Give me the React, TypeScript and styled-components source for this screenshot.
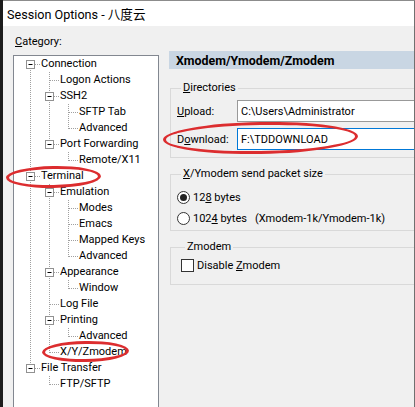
import React from 'react';
import styled, { createGlobalStyle } from 'styled-components';

interface TreeNode {
  label: string;
  children?: TreeNode[];
}

interface TreeRow {
  label: string;
  guides: boolean[];
  first: boolean;
  last: boolean;
  hasChildren: boolean;
}

const categories: TreeNode[] = [
  {
    label: 'Connection',
    children: [
      { label: 'Logon Actions' },
      { label: 'SSH2', children: [{ label: 'SFTP Tab' }, { label: 'Advanced' }] },
      { label: 'Port Forwarding', children: [{ label: 'Remote/X11' }] },
    ],
  },
  {
    label: 'Terminal',
    children: [
      {
        label: 'Emulation',
        children: [
          { label: 'Modes' },
          { label: 'Emacs' },
          { label: 'Mapped Keys' },
          { label: 'Advanced' },
        ],
      },
      { label: 'Appearance', children: [{ label: 'Window' }] },
      { label: 'Log File' },
      { label: 'Printing', children: [{ label: 'Advanced' }] },
      { label: 'X/Y/Zmodem' },
    ],
  },
  { label: 'File Transfer', children: [{ label: 'FTP/SFTP' }] },
];

const flatten = (nodes: TreeNode[], guides: boolean[], out: TreeRow[]) => {
  nodes.forEach((node, i) => {
    const last = i === nodes.length - 1;
    out.push({
      label: node.label,
      guides,
      first: guides.length === 0 && i === 0,
      last,
      hasChildren: !!node.children?.length,
    });
    if (node.children) {
      flatten(node.children, [...guides, !last], out);
    }
  });
  return out;
};

const GlobalStyle = createGlobalStyle`
  html, body {
    margin: 0;
    padding: 0;
    background: #1c1c1c;
  }
  body {
    font-family: Roboto, "Noto Sans", "Noto Sans CJK SC", sans-serif;
    color: #000;
  }
`;

const Screen = styled.div`
  position: relative;
  width: 415px;
  height: 407px;
  box-sizing: border-box;
  padding-left: 3px;
  display: flex;
  overflow: hidden;
  background: #1c1c1c;
`;

const Window = styled.div`
  flex: 1;
  min-width: 0;
  display: flex;
  flex-direction: column;
  background: #f0f0f0;
  border-top: 1px solid #8c8c8c;
  border-right: 1px solid #707070;
`;

const TitleBar = styled.div`
  height: 25px;
  flex-shrink: 0;
  display: flex;
  align-items: center;
  padding-left: 4px;
  background: #fff;
  font-size: 12.6px;
  font-family: Roboto, "Noto Sans CJK SC", sans-serif;
`;

const Body = styled.div`
  flex: 1;
  display: flex;
  overflow: hidden;
  padding: 8px 0 0 10px;
`;

const LeftColumn = styled.div`
  width: 146px;
  flex-shrink: 0;
  display: flex;
  flex-direction: column;
`;

const FieldLabel = styled.div`
  font-size: 11px;
  line-height: 16px;
  padding-left: 2px;
  margin-bottom: 5px;
`;

const TreeBox = styled.div`
  height: 380px;
  flex-shrink: 0;
  box-sizing: border-box;
  background: #fff;
  border: 1px solid #828790;
  padding-left: 7px;
`;

const TreeLine = styled.div`
  display: flex;
  align-items: center;
  height: 16px;
`;

const TreeLabel = styled.span`
  margin-left: 1px;
  font-size: 11px;
  line-height: 16px;
  white-space: nowrap;
`;

const RightColumn = styled.div`
  width: 300px;
  flex-shrink: 0;
  margin-left: 10px;
  padding-top: 17px;
`;

const PageHeader = styled.div`
  height: 18px;
  display: flex;
  align-items: center;
  padding-left: 7px;
  background: #c9d6e3;
  font-size: 12.4px;
  font-weight: 700;
`;

const Group = styled.fieldset<{ $top: number; $pad: string }>`
  margin: ${(p) => p.$top}px 0 0 1px;
  padding: ${(p) => p.$pad};
  min-width: 0;
  border: 1px solid #d9d9d9;
`;

const GroupTitle = styled.legend`
  margin-left: 4px;
  padding: 0 2px;
  font-size: 11px;
  line-height: 16px;
`;

const PathRows = styled.div`
  display: flex;
  flex-direction: column;
  gap: 6px;
`;

const PathRow = styled.div`
  display: flex;
  align-items: center;
  height: 22px;
`;

const PathLabel = styled.span`
  width: 60px;
  flex-shrink: 0;
  font-size: 11px;
`;

const PathInput = styled.input<{ $focused?: boolean }>`
  width: 200px;
  height: 22px;
  box-sizing: border-box;
  margin: 0;
  padding: 0 3px;
  border: 1px solid ${(p) => (p.$focused ? '#0078d7' : '#999')};
  background: #fff;
  font-family: Roboto, sans-serif;
  font-size: 11px;
  color: #000;
  outline: none;
`;

const OptionRows = styled.div`
  display: flex;
  flex-direction: column;
  gap: 1px;
`;

const OptionRow = styled.label`
  display: flex;
  align-items: center;
  height: 20px;
  font-size: 11px;
  white-space: nowrap;
`;

const Radio = styled.span<{ $checked?: boolean }>`
  width: 13px;
  height: 13px;
  box-sizing: border-box;
  border-radius: 50%;
  border: 1px solid #333;
  background: #fff;
  margin-right: 3px;
  display: flex;
  align-items: center;
  justify-content: center;
  flex-shrink: 0;

  &::after {
    content: '';
    width: 7px;
    height: 7px;
    border-radius: 50%;
    background: ${(p) => (p.$checked ? '#222' : 'transparent')};
  }
`;

const CheckBox = styled.span`
  width: 13px;
  height: 13px;
  box-sizing: border-box;
  border: 1px solid #333;
  background: #fff;
  margin-right: 3px;
  flex-shrink: 0;
`;

const Note = styled.span`
  margin-left: 8px;
`;

const Annotation = styled.div<{ $x: number; $y: number; $w: number; $h: number; $rot?: number }>`
  position: absolute;
  left: ${(p) => p.$x}px;
  top: ${(p) => p.$y}px;
  width: ${(p) => p.$w}px;
  height: ${(p) => p.$h}px;
  box-sizing: border-box;
  border: 3px solid #dc2d2f;
  border-radius: 50%;
  transform: rotate(${(p) => p.$rot ?? 0}deg);
  pointer-events: none;
`;

const DOT = '#a0a0a0';

const Guide = ({ on }: { on: boolean }) => (
  <svg width="19" height="16" viewBox="0 0 19 16">
    {on && <line x1="9.5" y1="0" x2="9.5" y2="16" stroke={DOT} strokeDasharray="1 1" />}
  </svg>
);

const Connector = ({ row }: { row: TreeRow }) => (
  <svg width="19" height="16" viewBox="0 0 19 16">
    <line
      x1="9.5"
      y1={row.first ? 8 : 0}
      x2="9.5"
      y2={row.last ? 9 : 16}
      stroke={DOT}
      strokeDasharray="1 1"
    />
    <line x1="10" y1="8.5" x2="19" y2="8.5" stroke={DOT} strokeDasharray="1 1" />
    {row.hasChildren && (
      <>
        <rect x="5.5" y="4.5" width="8" height="8" fill="#fff" stroke="#919191" />
        <line x1="7.5" y1="8.5" x2="11.5" y2="8.5" stroke="#000" />
      </>
    )}
  </svg>
);

export default function App() {
  const rows = flatten(categories, [], []);

  return (
    <Screen>
      <GlobalStyle />
      <Window>
        <TitleBar>Session Options - 八度云</TitleBar>
        <Body>
          <LeftColumn>
            <FieldLabel>
              <u>C</u>ategory:
            </FieldLabel>
            <TreeBox>
              {rows.map((row, i) => (
                <TreeLine key={i}>
                  {row.guides.map((on, j) => (
                    <Guide key={j} on={on} />
                  ))}
                  <Connector row={row} />
                  <TreeLabel>{row.label}</TreeLabel>
                </TreeLine>
              ))}
            </TreeBox>
          </LeftColumn>

          <RightColumn>
            <PageHeader>Xmodem/Ymodem/Zmodem</PageHeader>

            <Group $top={11} $pad="4px 0 7px 6px">
              <GroupTitle>
                <u>D</u>irectories
              </GroupTitle>
              <PathRows>
                <PathRow>
                  <PathLabel>
                    <u>U</u>pload:
                  </PathLabel>
                  <PathInput readOnly value={'C:\\Users\\Administrator'} />
                </PathRow>
                <PathRow>
                  <PathLabel>
                    D<u>o</u>wnload:
                  </PathLabel>
                  <PathInput $focused readOnly value={'F:\\TDDOWNLOAD'} />
                </PathRow>
              </PathRows>
            </Group>

            <Group $top={8} $pad="5px 0 2px 6px">
              <GroupTitle>
                <u>X</u>/Ymodem send packet size
              </GroupTitle>
              <OptionRows>
                <OptionRow>
                  <Radio $checked />
                  12<u>8</u>&nbsp;bytes
                </OptionRow>
                <OptionRow>
                  <Radio />
                  102<u>4</u>&nbsp;bytes
                  <Note>(Xmodem-1k/Ymodem-1k)</Note>
                </OptionRow>
              </OptionRows>
            </Group>

            <Group $top={8} $pad="0 0 9px 10px">
              <GroupTitle>Zmodem</GroupTitle>
              <OptionRow>
                <CheckBox />
                Disable&nbsp;<u>Z</u>modem
              </OptionRow>
            </Group>
          </RightColumn>
        </Body>
      </Window>

      <Annotation $x={6} $y={166} $w={95} $h={22} $rot={-1} />
      <Annotation $x={163} $y={122} $w={195} $h={32} $rot={-1} />
      <Annotation $x={42} $y={341} $w={87} $h={21} $rot={-1} />
    </Screen>
  );
}
